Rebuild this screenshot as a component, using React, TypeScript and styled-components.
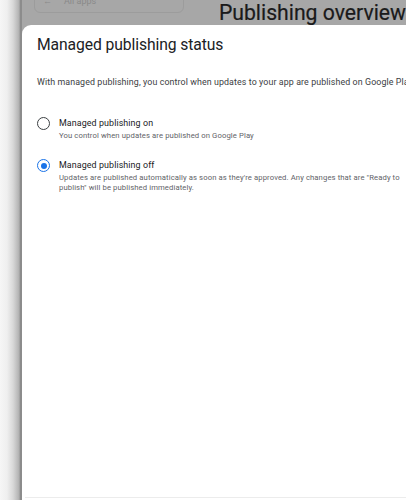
import React from "react";
import styled, { createGlobalStyle } from "styled-components";

const Global = createGlobalStyle`
  html, body { margin: 0; padding: 0; background: #a7a7a7; }
  body { font-family: Roboto, "Noto Sans", Arial, sans-serif; -webkit-font-smoothing: antialiased; }
  #root { height: 500px; }
`;

const Frame = styled.div`
  display: flex;
  width: 406px;
  height: 500px;
  overflow: hidden;
`;

const WindowShade = styled.div`
  flex: 0 0 20px;
  background: linear-gradient(to right, #f6f6f6 0%, #efefef 35%, #d8d8d8 65%, #b6b6b6 92%, #9c9c9c 100%);
`;

const WindowEdge = styled.div`
  flex: 0 0 2px;
  background: #8c8c8c;
`;

const Scrim = styled.div`
  flex: 1;
  display: flex;
  flex-direction: column;
  background: #a7a7a7;
  min-width: 0;
`;

const TopBar = styled.div`
  flex: 0 0 25px;
  display: flex;
  align-items: flex-start;
`;

const SearchBox = styled.div`
  margin-left: 12px;
  margin-top: -12px;
  width: 153px;
  height: 25px;
  box-sizing: border-box;
  border: 1px solid #9c9c9c;
  border-radius: 6px;
  display: flex;
  align-items: center;
  gap: 12px;
  padding-left: 8px;
  color: #8a8a8a;
  font-size: 9px;
`;

const PageTitle = styled.h1`
  margin: 0 0 0 35px;
  font-size: 21.2px;
  line-height: 25px;
  font-weight: 400;
  color: #1a1a1a;
  white-space: nowrap;
  -webkit-text-stroke: 0.2px #1a1a1a;
`;

const Dialog = styled.div`
  flex: 1;
  background: #ffffff;
  border-top-left-radius: 9px;
  width: 460px;
  padding: 10px 0 0 15px;
  box-sizing: border-box;
  display: flex;
  flex-direction: column;
  position: relative;
`;

const DialogTitle = styled.h2`
  margin: 0;
  font-size: 15.7px;
  line-height: 20px;
  font-weight: 400;
  color: #202124;
  letter-spacing: -0.1px;
`;

const Intro = styled.p`
  margin: 21px 0 0;
  font-size: 8.85px;
  line-height: 12px;
  color: #3c4043;
  white-space: nowrap;
  letter-spacing: 0.1px;
`;

const Options = styled.div`
  margin-top: 29px;
  display: flex;
  flex-direction: column;
  gap: 18px;
`;

const Option = styled.label`
  display: flex;
  align-items: flex-start;
  gap: 9px;
`;

const Radio = styled.span<{ $checked?: boolean }>`
  flex: 0 0 13px;
  width: 13px;
  height: 13px;
  box-sizing: border-box;
  border-radius: 50%;
  border: 1.5px solid ${(p) => (p.$checked ? "#1a73e8" : "#3c4043")};
  display: flex;
  align-items: center;
  justify-content: center;
  &::after {
    content: "";
    width: 6px;
    height: 6px;
    border-radius: 50%;
    background: ${(p) => (p.$checked ? "#1a73e8" : "transparent")};
  }
`;

const OptionText = styled.div`
  display: flex;
  flex-direction: column;
  gap: 2px;
`;

const OptionLabel = styled.span`
  font-size: 8.9px;
  line-height: 12px;
  color: #202124;
  letter-spacing: 0.1px;
`;

const OptionHint = styled.span`
  font-size: 7.7px;
  line-height: 10px;
  color: #5f6368;
  white-space: nowrap;
  letter-spacing: 0.1px;
`;

const BottomRule = styled.div`
  position: absolute;
  left: 3px;
  right: 60px;
  bottom: 2px;
  height: 1px;
  background: #ececec;
`;

export default function App() {
  return (
    <>
      <Global />
      <Frame>
        <WindowShade />
        <WindowEdge />
        <Scrim>
          <TopBar>
            <SearchBox>
              <span>←</span>
              <span>All apps</span>
            </SearchBox>
            <PageTitle>Publishing overview</PageTitle>
          </TopBar>
          <Dialog>
            <DialogTitle>Managed publishing status</DialogTitle>
            <Intro>
              With managed publishing, you control when updates to your app are published on Google Play
            </Intro>
            <Options>
              <Option>
                <Radio />
                <OptionText>
                  <OptionLabel>Managed publishing on</OptionLabel>
                  <OptionHint>You control when updates are published on Google Play</OptionHint>
                </OptionText>
              </Option>
              <Option>
                <Radio $checked />
                <OptionText>
                  <OptionLabel>Managed publishing off</OptionLabel>
                  <OptionHint>
                    Updates are published automatically as soon as they're approved. Any changes that are "Ready to
                    <br />
                    publish" will be published immediately.
                  </OptionHint>
                </OptionText>
              </Option>
            </Options>
            <BottomRule />
          </Dialog>
        </Scrim>
      </Frame>
    </>
  );
}
